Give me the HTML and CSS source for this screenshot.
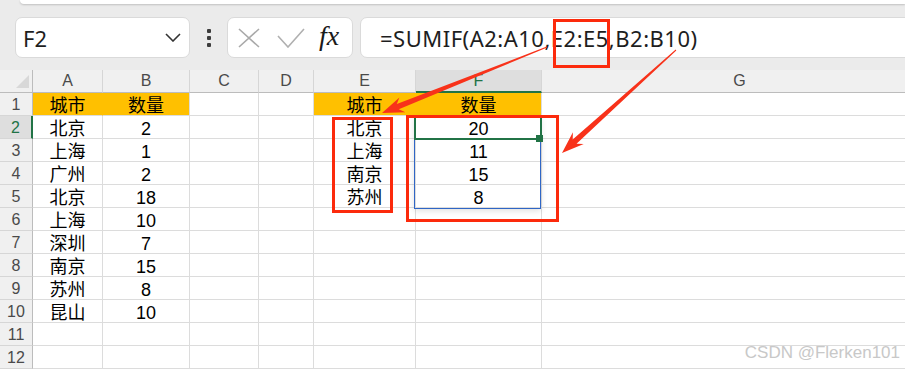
FILE: index.html
```html
<!DOCTYPE html>
<html lang="zh">
<head>
    <meta charset="UTF-8">
    <title>SUMIF</title>
    <link rel="stylesheet" href="styles.css">
</head>
<body>
<div class="app">

    <!-- formula bar area -->
    <div class="top">
        <div class="strip"></div>
        <div class="toolbar">
            <div class="namebox">
                <span>F2</span>
                <svg width="16" height="9" viewBox="0 0 16 9"><polyline points="1,1 8,8 15,1" fill="none" stroke="#333" stroke-width="1.6"/></svg>
            </div>
            <div class="dots"><i></i><i></i><i></i></div>
            <div class="fnbox">
                <svg class="ic-x" width="22" height="20" viewBox="0 0 22 20"><path d="M1 1 L21 19 M21 1 L1 19" stroke="#a9a9a9" stroke-width="1.6" fill="none"/></svg>
                <svg class="ic-ok" width="28" height="20" viewBox="0 0 28 20"><polyline points="1,8 11,19 27,1" fill="none" stroke="#b0b0b0" stroke-width="1.6"/></svg>
                <span class="fx">fx</span>
            </div>
            <div class="formula">=SUMIF(A2:A10,E2:E5,B2:B10)</div>
        </div>
    </div>

    <!-- sheet -->
    <div class="sheet">
        <div class="hd corner"><b></b></div>
        <div class="hd">A</div>
        <div class="hd">B</div>
        <div class="hd">C</div>
        <div class="hd">D</div>
        <div class="hd">E</div>
        <div class="hd active">F</div>
        <div class="hd">G</div>

        <div class="rh">1</div>
        <div class="c y ymid">城市</div>
        <div class="c y">数量</div>
        <div class="c"></div>
        <div class="c"></div>
        <div class="c y ymid">城市</div>
        <div class="c y">数量</div>
        <div class="c"></div>

        <div class="rh active">2</div>
        <div class="c">北京</div>
        <div class="c">2</div>
        <div class="c"></div>
        <div class="c"></div>
        <div class="c">北京</div>
        <div class="c">20</div>
        <div class="c"></div>

        <div class="rh">3</div>
        <div class="c">上海</div>
        <div class="c">1</div>
        <div class="c"></div>
        <div class="c"></div>
        <div class="c">上海</div>
        <div class="c">11</div>
        <div class="c"></div>

        <div class="rh">4</div>
        <div class="c">广州</div>
        <div class="c">2</div>
        <div class="c"></div>
        <div class="c"></div>
        <div class="c">南京</div>
        <div class="c">15</div>
        <div class="c"></div>

        <div class="rh">5</div>
        <div class="c">北京</div>
        <div class="c">18</div>
        <div class="c"></div>
        <div class="c"></div>
        <div class="c">苏州</div>
        <div class="c">8</div>
        <div class="c"></div>

        <div class="rh">6</div>
        <div class="c">上海</div>
        <div class="c">10</div>
        <div class="c"></div><div class="c"></div><div class="c"></div><div class="c"></div><div class="c"></div>

        <div class="rh">7</div>
        <div class="c">深圳</div>
        <div class="c">7</div>
        <div class="c"></div><div class="c"></div><div class="c"></div><div class="c"></div><div class="c"></div>

        <div class="rh">8</div>
        <div class="c">南京</div>
        <div class="c">15</div>
        <div class="c"></div><div class="c"></div><div class="c"></div><div class="c"></div><div class="c"></div>

        <div class="rh">9</div>
        <div class="c">苏州</div>
        <div class="c">8</div>
        <div class="c"></div><div class="c"></div><div class="c"></div><div class="c"></div><div class="c"></div>

        <div class="rh">10</div>
        <div class="c">昆山</div>
        <div class="c">10</div>
        <div class="c"></div><div class="c"></div><div class="c"></div><div class="c"></div><div class="c"></div>

        <div class="rh">11</div>
        <div class="c"></div><div class="c"></div><div class="c"></div><div class="c"></div><div class="c"></div><div class="c"></div><div class="c"></div>

        <div class="rh">12</div>
        <div class="c"></div><div class="c"></div><div class="c"></div><div class="c"></div><div class="c"></div><div class="c"></div><div class="c"></div>

        <!-- selection -->
        <div class="range"></div>
        <div class="selected"></div>
        <div class="handle"></div>
    </div>

    <!-- red markup drawn over the screenshot -->
    <svg class="annot" width="905" height="370" viewBox="0 0 905 370">
        <rect x="554.5" y="20.5" width="54" height="46" fill="none" stroke="#fc2a0c" stroke-width="3"/>
        <rect x="333.5" y="118.5" width="58" height="93" fill="none" stroke="#fc2a0c" stroke-width="3"/>
        <rect x="407.5" y="116.5" width="150" height="104" fill="none" stroke="#fc2a0c" stroke-width="3"/>
        <polygon fill="#f8321a" points="547.2,47.5 398.8,109.3 405.4,112.3 382,113 399.4,97.4 396.8,104.1 546.8,46.5"/>
        <polygon fill="#f8321a" points="676.3,50.4 576.5,143.7 583.7,144.1 562,153 572.9,132.3 572.7,139.5 675.7,49.6"/>
    </svg>

    <div class="mark">CSDN @Flerken101</div>
</div>
</body>
</html>
```

FILE: styles.css
```css
/* General */
body {
    margin: 0;
    font-family: "Noto Sans", "Noto Sans CJK SC", sans-serif;
    background: #fff;
}

.app {
    position: relative;
    width: 905px;
    height: 370px;
    overflow: hidden;
}

/* Formula bar */
.top {
    height: 70px;
    background: #ebebeb;
}

.strip {
    height: 4px;
    margin-left: 20px;
    background: #fff;
    border-bottom-left-radius: 6px;
    box-shadow: 0 1px 2px rgba(0, 0, 0, 0.18);
}

.toolbar {
    display: flex;
    align-items: center;
    padding: 13px 0 0 15px;
}

.namebox, .fnbox, .formula {
    height: 41px;
    box-sizing: border-box;
    background: #fff;
    border: 1px solid #dadada;
    border-radius: 7px;
    display: flex;
    align-items: center;
}

.namebox {
    width: 175px;
    padding: 0 8px 0 7px;
    justify-content: space-between;
    font-size: 22px;
    color: #1e1e1e;
}

.dots {
    display: flex;
    flex-direction: column;
    gap: 3px;
    margin: 0 16px 0 17px;
}

.dots i {
    width: 4px;
    height: 4px;
    border-radius: 1px;
    background: #3c3c3c;
}

.fnbox {
    width: 126px;
    padding-left: 10px;
}

.ic-ok {
    margin-left: 17px;
}

.fx {
    margin-left: 14px;
    font-family: "Liberation Serif", serif;
    font-style: italic;
    font-size: 28px;
    color: #1a1a1a;
    line-height: 1;
    margin-top: -4px;
}

.formula {
    flex: 1;
    margin-left: 7px;
    margin-right: -10px;
    padding-left: 19px;
    font-size: 22px;
    letter-spacing: 0.5px;
    color: #1e1e1e;
    white-space: nowrap;
}

/* Sheet */
.sheet {
    position: relative;
    display: grid;
    grid-template-columns: 33px 70px 87px 69px 55px 102px 126px 396px;
    grid-auto-rows: 23px;
    font-family: "Liberation Sans", "Noto Sans CJK SC", sans-serif;
}

.hd, .rh, .c {
    box-sizing: border-box;
    display: flex;
    align-items: center;
    justify-content: center;
}

.hd {
    background: #f0f0f0;
    border-right: 1px solid #d6d6d6;
    border-bottom: 1px solid #bcbcbc;
    font-size: 16px;
    line-height: 16px;
    color: #4a4a4a;
}

.hd.active {
    background: #dedede;
    border-bottom: 2px solid #217346;
    color: #217346;
}

.corner {
    justify-content: flex-end;
    align-items: flex-end;
    padding: 0 3px 4px 0;
    border-right-color: #bcbcbc;
}

.corner b {
    width: 0;
    height: 0;
    border-left: 13px solid transparent;
    border-bottom: 13px solid #d8d8d8;
}

.rh {
    background: #f0f0f0;
    border-right: 1px solid #bcbcbc;
    border-bottom: 1px solid #d6d6d6;
    font-size: 16px;
    line-height: 16px;
    color: #4a4a4a;
    padding-top: 2px;
}

.rh.active {
    background: #dedede;
    border-right: 2px solid #217346;
    color: #217346;
}

.c {
    border-right: 1px solid #dcdcdc;
    border-bottom: 1px solid #dcdcdc;
    font-size: 18px;
    line-height: 18px;
    color: #000;
    padding-top: 4px;
}

.c.y {
    background: #ffc000;
}

.c.ymid {
    border-right-color: #ffc000;
}

.range {
    position: absolute;
    left: 414px;
    top: 46px;
    width: 127px;
    height: 93px;
    border: 1px solid #2f66c6;
    box-sizing: border-box;
    box-shadow: 0 2px 6px rgba(0, 0, 0, 0.12);
}

.selected {
    position: absolute;
    left: 414px;
    top: 45px;
    width: 128px;
    height: 25px;
    border: 2px solid #217346;
    box-sizing: border-box;
}

.handle {
    position: absolute;
    left: 536px;
    top: 65px;
    width: 7px;
    height: 7px;
    background: #217346;
}

/* Markup on top */
.annot {
    position: absolute;
    top: 0;
    left: 0;
    pointer-events: none;
}

.mark {
    position: absolute;
    right: 5px;
    top: 343px;
    font-family: "Liberation Sans", sans-serif;
    font-size: 17px;
    color: #c8c8c8;
}
```
